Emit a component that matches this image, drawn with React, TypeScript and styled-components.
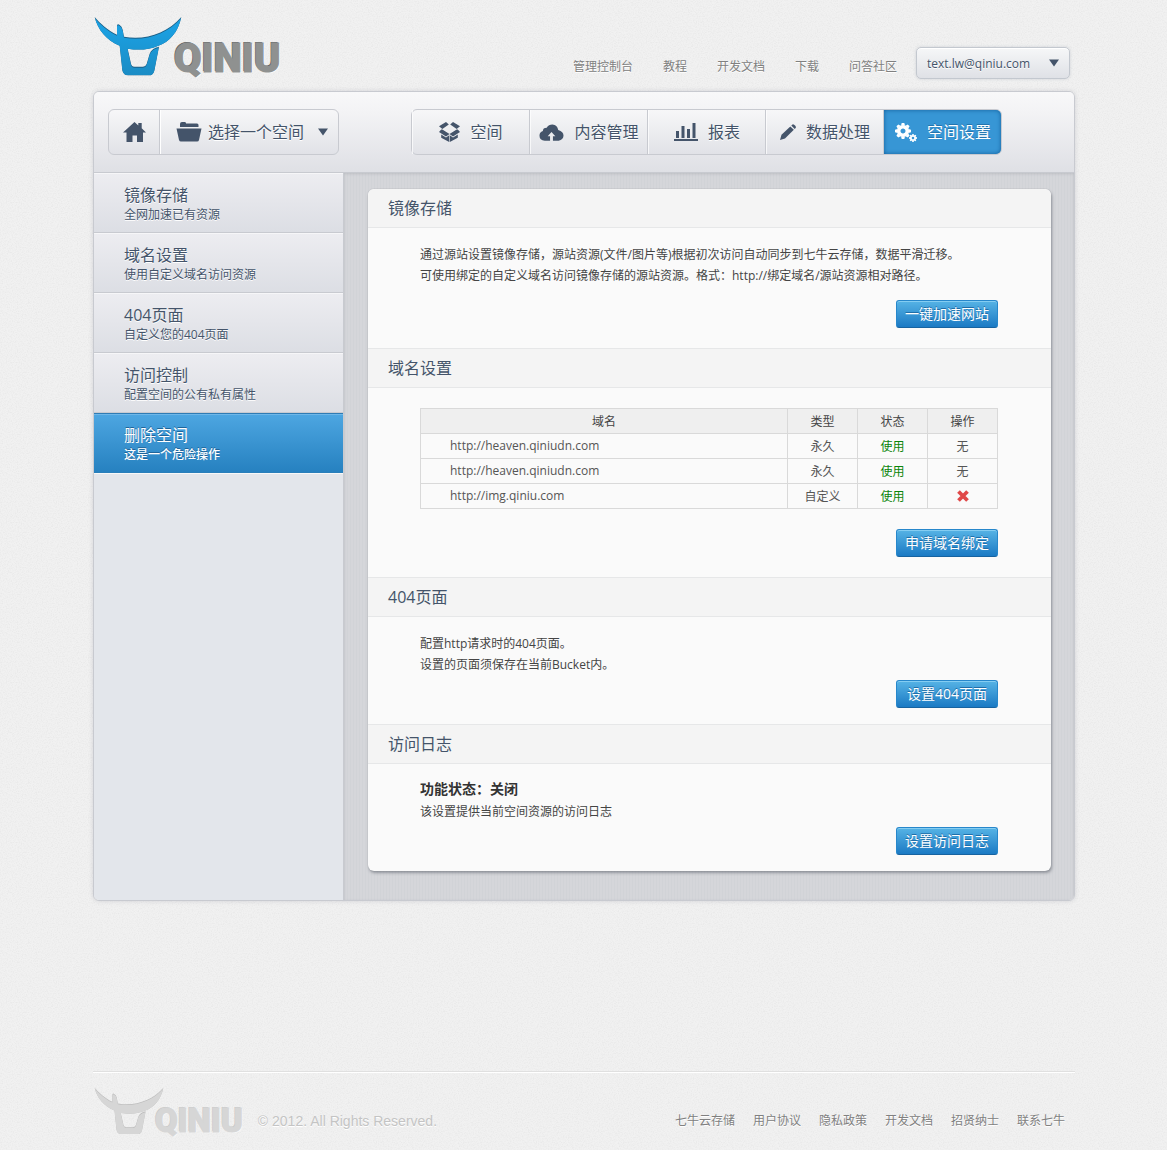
import React from "react";
import styled, { createGlobalStyle, css } from "styled-components";

const ink = "#44546a";
const line = "#c8cad0";
const sans = `"Open Sans", "Noto Sans CJK SC", sans-serif`;

const grain =
  "url(\"data:image/svg+xml,%3Csvg xmlns='http://www.w3.org/2000/svg' width='160' height='160'%3E%3Cfilter id='n'%3E%3CfeTurbulence type='fractalNoise' baseFrequency='.8' numOctaves='2' stitchTiles='stitch'/%3E%3CfeColorMatrix values='0 0 0 0 .45 0 0 0 0 .45 0 0 0 0 .45 .3 0 0 0 -.12'/%3E%3C/filter%3E%3Crect width='160' height='160' filter='url(%23n)'/%3E%3C/svg%3E\")";

const GlobalStyle = createGlobalStyle`
  *, *::before, *::after { box-sizing: border-box; }
  body {
    margin: 0;
    background: #f1f1f1 ${grain};
    font: 12px/21px ${sans};
    color: #444;
  }
  a { color: inherit; text-decoration: none; }
  h2, p { margin: 0; font-weight: normal; }
  button, select { font-family: inherit; color: inherit; cursor: pointer; }
`;

const Page = styled.div`
  max-width: 983px;
  margin: 0 auto;
  padding-left: 1px;
`;

const Header = styled.header`
  display: flex;
  align-items: flex-end;
  justify-content: space-between;
  padding: 16px 5px 12px 1px;
`;

const HeaderRight = styled.div`
  display: flex;
  align-items: flex-end;
  gap: 19px;
`;

const TopNav = styled.nav`
  display: flex;
  gap: 30px;
  line-height: 24px;
  color: #808080;
  text-shadow: 0 1px 0 #fff;
`;

const LogoLink = styled.a`
  display: flex;
  align-items: flex-start;
`;

const Wordmark = styled.span<{ $small?: boolean }>`
  font-family: Roboto, "Liberation Sans", sans-serif;
  font-weight: 900;
  ${(p) =>
    p.$small
      ? css`
          margin: 20px 0 0 -9px;
          font-size: 33px;
          line-height: 28px;
          color: #d6d6d6;
          -webkit-text-stroke: 1px #d6d6d6;
          text-shadow: -1px -1px 0 #c9c9c9, 1px 1px 0 #fafafa;
        `
      : css`
          margin: 24px 0 0 -8px;
          font-size: 40px;
          line-height: 38px;
          color: #8f9190;
          -webkit-text-stroke: 1px #8f9190;
          text-shadow: -1px -1px 0 #606262, 1px 1px 0 #fff;
        `}
`;

const AccountBox = styled.label`
  position: relative;
  display: flex;
  width: 154px;
  height: 32px;
  border: 1px solid #c3c8cf;
  border-radius: 5px;
  background: linear-gradient(#f6f7f8, #dfe1e6);
  box-shadow: 0 0 3px rgba(140, 150, 165, 0.35), inset 0 1px 0 #fff;
  color: ${ink};
`;

const Picker = styled.select<{ $size: number; $left: number }>`
  flex: 1;
  min-width: 0;
  padding: 0 24px 0 ${(p) => p.$left}px;
  border: 0;
  appearance: none;
  background: transparent;
  font-size: ${(p) => p.$size}px;
  text-shadow: 0 1px 0 #fff;
`;

const CaretIcon = styled.svg`
  position: absolute;
  right: 10px;
  top: 50%;
  margin-top: -4px;
  pointer-events: none;
`;

const Panel = styled.div`
  border: 1px solid ${line};
  border-radius: 6px;
  overflow: hidden;
  box-shadow: 0 0 4px rgba(120, 125, 135, 0.25);
`;

const Toolbar = styled.div`
  display: flex;
  gap: 72px;
  padding: 17px 14px;
  border-bottom: 1px solid ${line};
  background: linear-gradient(#f8f8f9, #f3f3f5 25%, #dfe0e5);
  color: ${ink};
`;

const Group = styled.div`
  display: flex;
  height: 46px;
  border: 1px solid ${line};
  border-radius: 6px;
  background: linear-gradient(#f7f7f8, #e1e2e7);
`;

const HomeButton = styled.button`
  display: flex;
  align-items: center;
  justify-content: center;
  width: 51px;
  padding: 0;
  border: 0;
  border-right: 1px solid ${line};
  background: none;
  box-shadow: 1px 0 0 #fff;
`;

const SpaceBox = styled.label`
  position: relative;
  display: flex;
  align-items: center;
  width: 178px;
  padding-left: 16px;
`;

const Tab = styled.button<{ $active?: boolean }>`
  display: flex;
  align-items: center;
  justify-content: center;
  gap: 10px;
  width: 118px;
  padding: 0 0 0 1px;
  border: 0;
  border-right: 1px solid ${line};
  background: none;
  box-shadow: inset 1px 0 0 rgba(255, 255, 255, 0.7);
  font-size: 16px;
  line-height: 24px;
  text-shadow: 0 1px 0 #fff;
  &:last-child {
    width: 117px;
    border-right: 0;
  }
  ${(p) =>
    p.$active &&
    css`
      border-radius: 0 5px 5px 0;
      background: #3796d5;
      box-shadow: inset 0 0 4px #14609c;
      color: #fff;
      text-shadow: 0 -1px 0 #2474ad;
    `}
`;

const Columns = styled.div`
  display: flex;
`;

const Sidebar = styled.nav`
  flex: 0 0 250px;
  border-right: 1px solid ${line};
  background: #e3e6eb;
  color: ${ink};
`;

const SideLink = styled.a<{ $active?: boolean }>`
  display: block;
  height: 60px;
  padding: 10px 0 0 30px;
  border-bottom: 1px solid ${line};
  background: linear-gradient(#ededf1, #dcdee4);
  box-shadow: inset 0 1px 0 #f6f6f8;
  text-shadow: 0 1px 0 #fff;
  ${(p) =>
    p.$active &&
    css`
      border-bottom-color: #2a7fba;
      background: linear-gradient(#4ea7e2, #2681c0);
      box-shadow: inset 0 1px 0 #2f7cb5, inset 0 2px 0 #6fb7e8, 0 1px 0 #f8f8f8;
      color: #fff;
      text-shadow: 0 -1px 0 #20659a;
    `}
`;

const SideTitle = styled.span`
  display: block;
  font-size: 16px;
  line-height: 24px;
`;

const SideNote = styled.span<{ $bold?: boolean }>`
  display: block;
  font-weight: ${(p) => (p.$bold ? 500 : 400)};
  line-height: 16px;
`;

const Main = styled.main`
  flex: 1;
  min-width: 0;
  padding: 16px 23px 29px 24px;
  background: repeating-linear-gradient(90deg, #d1d3d7 0 1px, #d5d6da 1px 3px);
  box-shadow: inset 0 1px 3px rgba(100, 105, 115, 0.2);
`;

const Card = styled.div`
  border-radius: 6px;
  overflow: hidden;
  background: #fafafa;
  box-shadow: 1px 2px 3px rgba(80, 85, 95, 0.5), 0 0 1px rgba(80, 85, 95, 0.4);
`;

const SectionTitle = styled.h2`
  padding: 0 20px;
  border: solid #e6e7e8;
  border-width: 1px 0;
  background: #f4f4f4;
  color: ${ink};
  font-size: 16px;
  line-height: 38px;
  section:first-child > & {
    border-top: 0;
  }
`;

const SectionBody = styled.div<{ $top: number; $gap: number; $bottom: number }>`
  display: flex;
  flex-direction: column;
  gap: ${(p) => p.$gap}px;
  padding: ${(p) => p.$top}px 53px ${(p) => p.$bottom}px 52px;
`;

const StateText = styled.p`
  margin-bottom: 3px;
  color: #333;
  font-size: 14px;
  font-weight: bold;
  line-height: 18px;
`;

const ActionButton = styled.button`
  align-self: flex-end;
  width: 102px;
  height: 28px;
  padding: 0;
  border: 1px solid #2787cb;
  border-bottom-color: #1763a0;
  border-radius: 3px;
  background: linear-gradient(#56b3e5, #1b7ac4);
  box-shadow: inset 0 1px 0 #84cdf2;
  color: #fff;
  font-size: 14px;
  line-height: 24px;
  text-shadow: 0 -1px 0 #1f6ea8;
`;

const DomainTable = styled.table`
  width: 100%;
  border-collapse: collapse;
  table-layout: fixed;
  line-height: 22px;
  text-align: center;
  color: #555;
`;

const HeadCell = styled.th<{ $narrow?: boolean }>`
  width: ${(p) => (p.$narrow ? "70px" : "auto")};
  padding: 2px 0 0;
  border: 1px solid #d9d9d9;
  background: #efefef;
  color: #444;
  font-weight: normal;
`;

const Cell = styled.td<{ $kind?: "url" | "ok" }>`
  padding: 2px 0 0;
  border: 1px solid #d9d9d9;
  ${(p) => p.$kind === "url" && css`padding: 1px 0 1px 29px; text-align: left;`}
  ${(p) => p.$kind === "ok" && css`color: #0a850a;`}
`;

const DeleteButton = styled.button`
  display: flex;
  align-items: flex-start;
  height: 22px;
  margin: 0 auto;
  padding: 4px 0 0;
  border: 0;
  background: none;
`;

const Footer = styled.footer`
  display: flex;
  align-items: flex-start;
  margin-top: 170px;
  padding: 15px 10px 13px 1px;
  border-top: 1px solid #e0e0e0;
  box-shadow: inset 0 1px 0 #fff;
`;

const Copyright = styled.p`
  flex: 1;
  padding: 24px 0 0 15px;
  color: #c4c4c4;
  font: 14px/21px "Liberation Sans", Arial, sans-serif;
  text-shadow: 0 1px 0 #fff;
`;

const FooterNav = styled.nav`
  display: flex;
  gap: 18px;
  padding-top: 23px;
  color: #808080;
  text-shadow: 0 1px 0 #fff;
`;

const hornPath =
  "M29 38C44 56 68 78 96 91L96 64Q97 58 103 61Q111 65 113 76L117 97C178 109 246 88 289 38C280 82 254 114 218 125C190 137 160 138 128 133L138 178Q140 187 148 187H174Q182 187 185 179L194 148Q200 132 222 127L208 199Q204 213 192 213H129Q115 213 112 198L104 124C64 108 38 76 29 38Z";

function Logo({ small }: { small?: boolean }) {
  const id = small ? "mark-small" : "mark";
  const [top, bottom, edge] = small ? ["#d6d6d6", "#d6d6d6", "#bdbdbd"] : ["#1b9fe0", "#1b8cc4", "#1b5f87"];
  return (
    <LogoLink href="#" aria-label="QINIU">
      <svg width={small ? 70 : 88} height={small ? 50 : 63} viewBox="27 35 264 189" aria-hidden="true">
        <defs>
          <linearGradient id={`${id}-fill`} x1="0" y1="0" x2="0" y2="1">
            <stop offset="0.2" stopColor={top} />
            <stop offset="1" stopColor={bottom} />
          </linearGradient>
          <clipPath id={`${id}-clip`}>
            <path d={hornPath} />
          </clipPath>
        </defs>
        <path d={hornPath} fill={edge} />
        <g clipPath={`url(#${id}-clip)`}>
          <path d={hornPath} fill={`url(#${id}-fill)`} transform="translate(0 3)" />
        </g>
      </svg>
      <Wordmark $small={small}>QINIU</Wordmark>
    </LogoLink>
  );
}

const Caret = () => (
  <CaretIcon width="10" height="8" viewBox="0 0 10 8" aria-hidden="true">
    <path d="M0 0.5H10L5 7.5Z" fill={ink} />
  </CaretIcon>
);

const HomeIcon = () => (
  <svg width="23" height="20" viewBox="0 0 23 20" fill={ink} aria-hidden="true">
    <path d="M11.500 0L15.300 3.400V1H18.700V6.300L23 10.500H20V20H14V13.500H9.500V20H3.500V10.500H0Z" />
  </svg>
);

const FolderIcon = () => (
  <svg width="26" height="20" viewBox="0 0 26 20" fill={ink} aria-hidden="true">
    <path d="M4 5V2Q4 0 6 0H9Q10 0 10 1.500H21Q22.500 1.500 22.500 3V5Z" />
    <path d="M0.500 6.500H25.500L23 18Q22.700 19.500 21 19.500H5Q3.500 19.500 3 18Z" />
  </svg>
);

const BoxIcon = () => (
  <svg width="21" height="20" viewBox="0 0 21 20" fill={ink} aria-hidden="true">
    <path d="M7 0L9.800 2.600L3.300 7L0 4.300Z" />
    <path d="M14 0L11.200 2.600L17.700 7L21 4.300Z" />
    <path d="M2.200 7.500H3.300L10.500 12L17.700 7.500H18.800L21 10L14 14.500L10.500 12L7 14.500L0 10Z" />
    <path d="M2.200 12.400L7 15.500L10.200 13.300V20L2.200 15.800Z" />
    <path d="M18.800 12.400L14 15.500L10.800 13.300V20L18.800 15.800Z" />
  </svg>
);

const CloudIcon = () => (
  <svg width="25" height="17" viewBox="0 0 26 17" fill={ink} aria-hidden="true">
    <path d="M6 17Q0.500 16.500 0.500 11.800Q0.500 8 4 7Q4 3.500 8 3.500Q10 0.300 14 0.300Q19 0.800 20 6Q25.500 7.500 25.500 12Q25 16.500 20.500 17H14.500V12.500H17L13 8L9 12.500H11.500V17Z" />
  </svg>
);

const ChartIcon = () => (
  <svg width="24" height="19" viewBox="0 0 24 19" fill={ink} aria-hidden="true">
    <path d="M0 16H24V18H0ZM2 8H5V15H2ZM7.500 3H10.500V15H7.500ZM13 6H16V15H13ZM18.500 0H21.500V15H18.500Z" />
  </svg>
);

const PencilIcon = () => (
  <svg width="16" height="16" viewBox="0 0 16 16" fill={ink} aria-hidden="true">
    <path d="M0 16L1.500 10.800L10.300 2.400L13.800 5.800L5 14.400Z" />
    <path d="M11.300 1.500L12.500 0.400Q13.500 -0.300 15.300 1.800Q16.300 3.200 15.600 4L14.700 4.900Z" />
  </svg>
);

const Gear = ({ cx, cy, r }: { cx: number; cy: number; r: number }) => (
  <g transform={`translate(${cx} ${cy}) scale(${r / 8})`}>
    <circle r="4.300" fill="none" stroke="#fff" strokeWidth="3.600" />
    {[0, 45, 90, 135, 180, 225, 270, 315].map((a) => (
      <path key={a} d="M-2 -5.500L-1.300 -8H1.300L2 -5.500Z" fill="#fff" transform={`rotate(${a})`} />
    ))}
  </g>
);

const GearsIcon = () => (
  <svg width="22" height="19" viewBox="0 0 22 19" aria-hidden="true">
    <Gear cx={8} cy={8} r={8} />
    <Gear cx={18} cy={15} r={4} />
  </svg>
);

const CrossIcon = () => (
  <svg width="12" height="12" viewBox="0 0 12 12" aria-hidden="true">
    <path d="M1.500 1.500L10.500 10.500M10.500 1.500L1.500 10.500" stroke="#e04848" strokeWidth="3.800" />
  </svg>
);

const topLinks = ["管理控制台", "教程", "开发文档", "下载", "问答社区"];
const footerLinks = ["七牛云存储", "用户协议", "隐私政策", "开发文档", "招贤纳士", "联系七牛"];

const tabs = [
  { label: "空间", icon: <BoxIcon /> },
  { label: "内容管理", icon: <CloudIcon /> },
  { label: "报表", icon: <ChartIcon /> },
  { label: "数据处理", icon: <PencilIcon /> },
  { label: "空间设置", icon: <GearsIcon />, active: true },
];

const sideItems = [
  { title: "镜像存储", note: "全网加速已有资源" },
  { title: "域名设置", note: "使用自定义域名访问资源" },
  { title: "404页面", note: "自定义您的404页面" },
  { title: "访问控制", note: "配置空间的公有私有属性" },
  { title: "删除空间", note: "这是一个危险操作", active: true },
];

const domains = [
  { url: "http://heaven.qiniudn.com", type: "永久" },
  { url: "http://heaven.qiniudn.com", type: "永久" },
  { url: "http://img.qiniu.com", type: "自定义", removable: true },
];

export default function App() {
  return (
    <Page>
      <GlobalStyle />
      <Header>
        <Logo />
        <HeaderRight>
          <TopNav>
            {topLinks.map((t) => (
              <a href="#" key={t}>{t}</a>
            ))}
          </TopNav>
          <AccountBox>
            <Picker $size={12} $left={10} aria-label="账户">
              <option>text.lw@qiniu.com</option>
            </Picker>
            <Caret />
          </AccountBox>
        </HeaderRight>
      </Header>

      <Panel>
        <Toolbar>
          <Group>
            <HomeButton aria-label="首页">
              <HomeIcon />
            </HomeButton>
            <SpaceBox>
              <FolderIcon />
              <Picker $size={16} $left={6} aria-label="空间">
                <option>选择一个空间</option>
              </Picker>
              <Caret />
            </SpaceBox>
          </Group>
          <Group>
            {tabs.map((t) => (
              <Tab key={t.label} $active={t.active}>
                {t.icon}
                {t.label}
              </Tab>
            ))}
          </Group>
        </Toolbar>

        <Columns>
          <Sidebar>
            {sideItems.map((s) => (
              <SideLink href="#" key={s.title} $active={s.active}>
                <SideTitle>{s.title}</SideTitle>
                <SideNote $bold={s.active}>{s.note}</SideNote>
              </SideLink>
            ))}
          </Sidebar>

          <Main>
            <Card>
              <section>
                <SectionTitle>镜像存储</SectionTitle>
                <SectionBody $top={16} $gap={14} $bottom={20}>
                  <p>
                    通过源站设置镜像存储，源站资源(文件/图片等)根据初次访问自动同步到七牛云存储，数据平滑迁移。
                    <br />
                    可使用绑定的自定义域名访问镜像存储的源站资源。格式：http://绑定域名/源站资源相对路径。
                  </p>
                  <ActionButton>一键加速网站</ActionButton>
                </SectionBody>
              </section>
              <section>
                <SectionTitle>域名设置</SectionTitle>
                <SectionBody $top={20} $gap={20} $bottom={20}>
                  <DomainTable>
                    <thead>
                      <tr>
                        <HeadCell>域名</HeadCell>
                        <HeadCell $narrow>类型</HeadCell>
                        <HeadCell $narrow>状态</HeadCell>
                        <HeadCell $narrow>操作</HeadCell>
                      </tr>
                    </thead>
                    <tbody>
                      {domains.map((d, i) => (
                        <tr key={i}>
                          <Cell $kind="url">{d.url}</Cell>
                          <Cell>{d.type}</Cell>
                          <Cell $kind="ok">使用</Cell>
                          <Cell>
                            {d.removable ? (
                              <DeleteButton aria-label="删除">
                                <CrossIcon />
                              </DeleteButton>
                            ) : (
                              "无"
                            )}
                          </Cell>
                        </tr>
                      ))}
                    </tbody>
                  </DomainTable>
                  <ActionButton>申请域名绑定</ActionButton>
                </SectionBody>
              </section>
              <section>
                <SectionTitle>404页面</SectionTitle>
                <SectionBody $top={16} $gap={5} $bottom={16}>
                  <p>
                    配置http请求时的404页面。
                    <br />
                    设置的页面须保存在当前Bucket内。
                  </p>
                  <ActionButton>设置404页面</ActionButton>
                </SectionBody>
              </section>
              <section>
                <SectionTitle>访问日志</SectionTitle>
                <SectionBody $top={16} $gap={5} $bottom={16}>
                  <div>
                    <StateText>功能状态：关闭</StateText>
                    <p>该设置提供当前空间资源的访问日志</p>
                  </div>
                  <ActionButton>设置访问日志</ActionButton>
                </SectionBody>
              </section>
            </Card>
          </Main>
        </Columns>
      </Panel>

      <Footer>
        <Logo small />
        <Copyright>© 2012. All Rights Reserved.</Copyright>
        <FooterNav>
          {footerLinks.map((t) => (
            <a href="#" key={t}>{t}</a>
          ))}
        </FooterNav>
      </Footer>
    </Page>
  );
}
